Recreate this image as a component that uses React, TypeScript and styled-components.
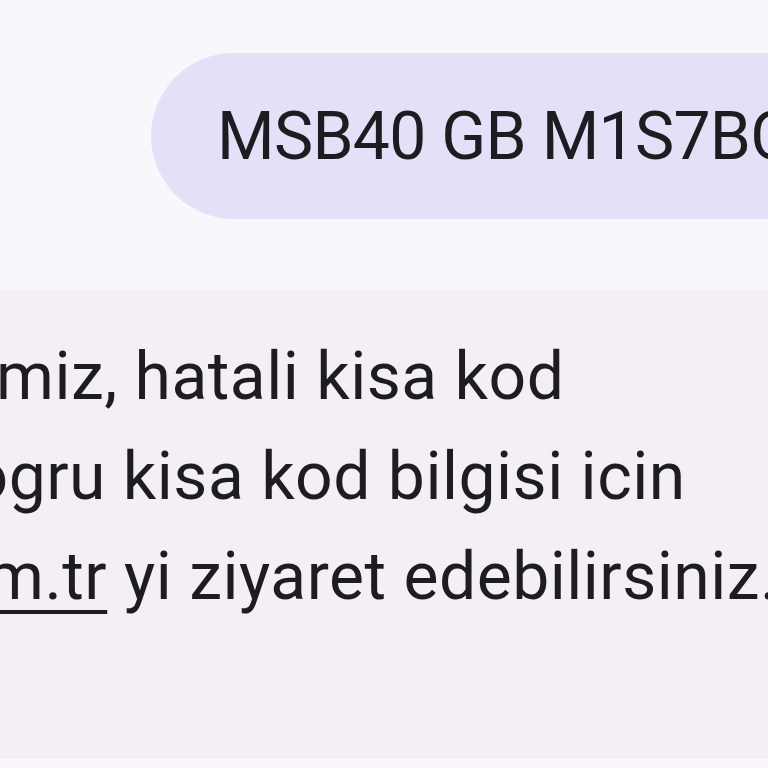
import React from "react";
import styled, { createGlobalStyle } from "styled-components";

const GlobalStyle = createGlobalStyle`
  html, body {
    margin: 0;
    padding: 0;
    background: #f8f7fc;
  }
  body {
    font-family: Roboto, "Noto Sans", Arial, sans-serif;
    color: #1d1c21;
  }
`;

const Screen = styled.div`
  width: 768px;
  height: 768px;
  overflow: hidden;
  background: #f8f7fc;
  display: flex;
  flex-direction: column;
`;

const OutgoingRow = styled.div`
  display: flex;
  padding: 53px 0 0 151px;
`;

const OutgoingBubble = styled.div`
  flex: none;
  height: 166px;
  display: flex;
  align-items: center;
  padding: 2px 80px 0 66px;
  box-sizing: border-box;
  background: #e3e1f7;
  border-radius: 83px;
  font-size: 66px;
  letter-spacing: -0.7px;
  white-space: nowrap;
  line-height: 1;
`;

const IncomingRow = styled.div`
  display: flex;
  margin-top: 71px;
  margin-left: -160px;
`;

const IncomingBubble = styled.div`
  flex: none;
  width: 1100px;
  height: 469px;
  box-sizing: border-box;
  padding: 37px 0 0 160px;
  background: #f4eff5;
  border-radius: 40px;
  display: flex;
  flex-direction: column;
`;

const Line = styled.div<{ $indent: number }>`
  margin-left: ${(p) => p.$indent}px;
  font-size: 66px;
  line-height: 100px;
  letter-spacing: 0.5px;
  white-space: nowrap;
`;

const Link = styled.span`
  text-decoration: underline;
  text-decoration-thickness: 3.5px;
  text-underline-offset: 11px;
`;

export default function App() {
  return (
    <>
      <GlobalStyle />
      <Screen>
        <OutgoingRow>
          <OutgoingBubble>MSB40 GB M1S7BC</OutgoingBubble>
        </OutgoingRow>
        <IncomingRow>
          <IncomingBubble>
            <Line $indent={-4}>miz, hatali kisa kod</Line>
            <Line $indent={-29.5}>ogru kisa kod bilgisi icin</Line>
            <Line $indent={-14}>
              <Link>m.tr</Link> yi ziyaret edebilirsiniz.
            </Line>
          </IncomingBubble>
        </IncomingRow>
      </Screen>
    </>
  );
}
